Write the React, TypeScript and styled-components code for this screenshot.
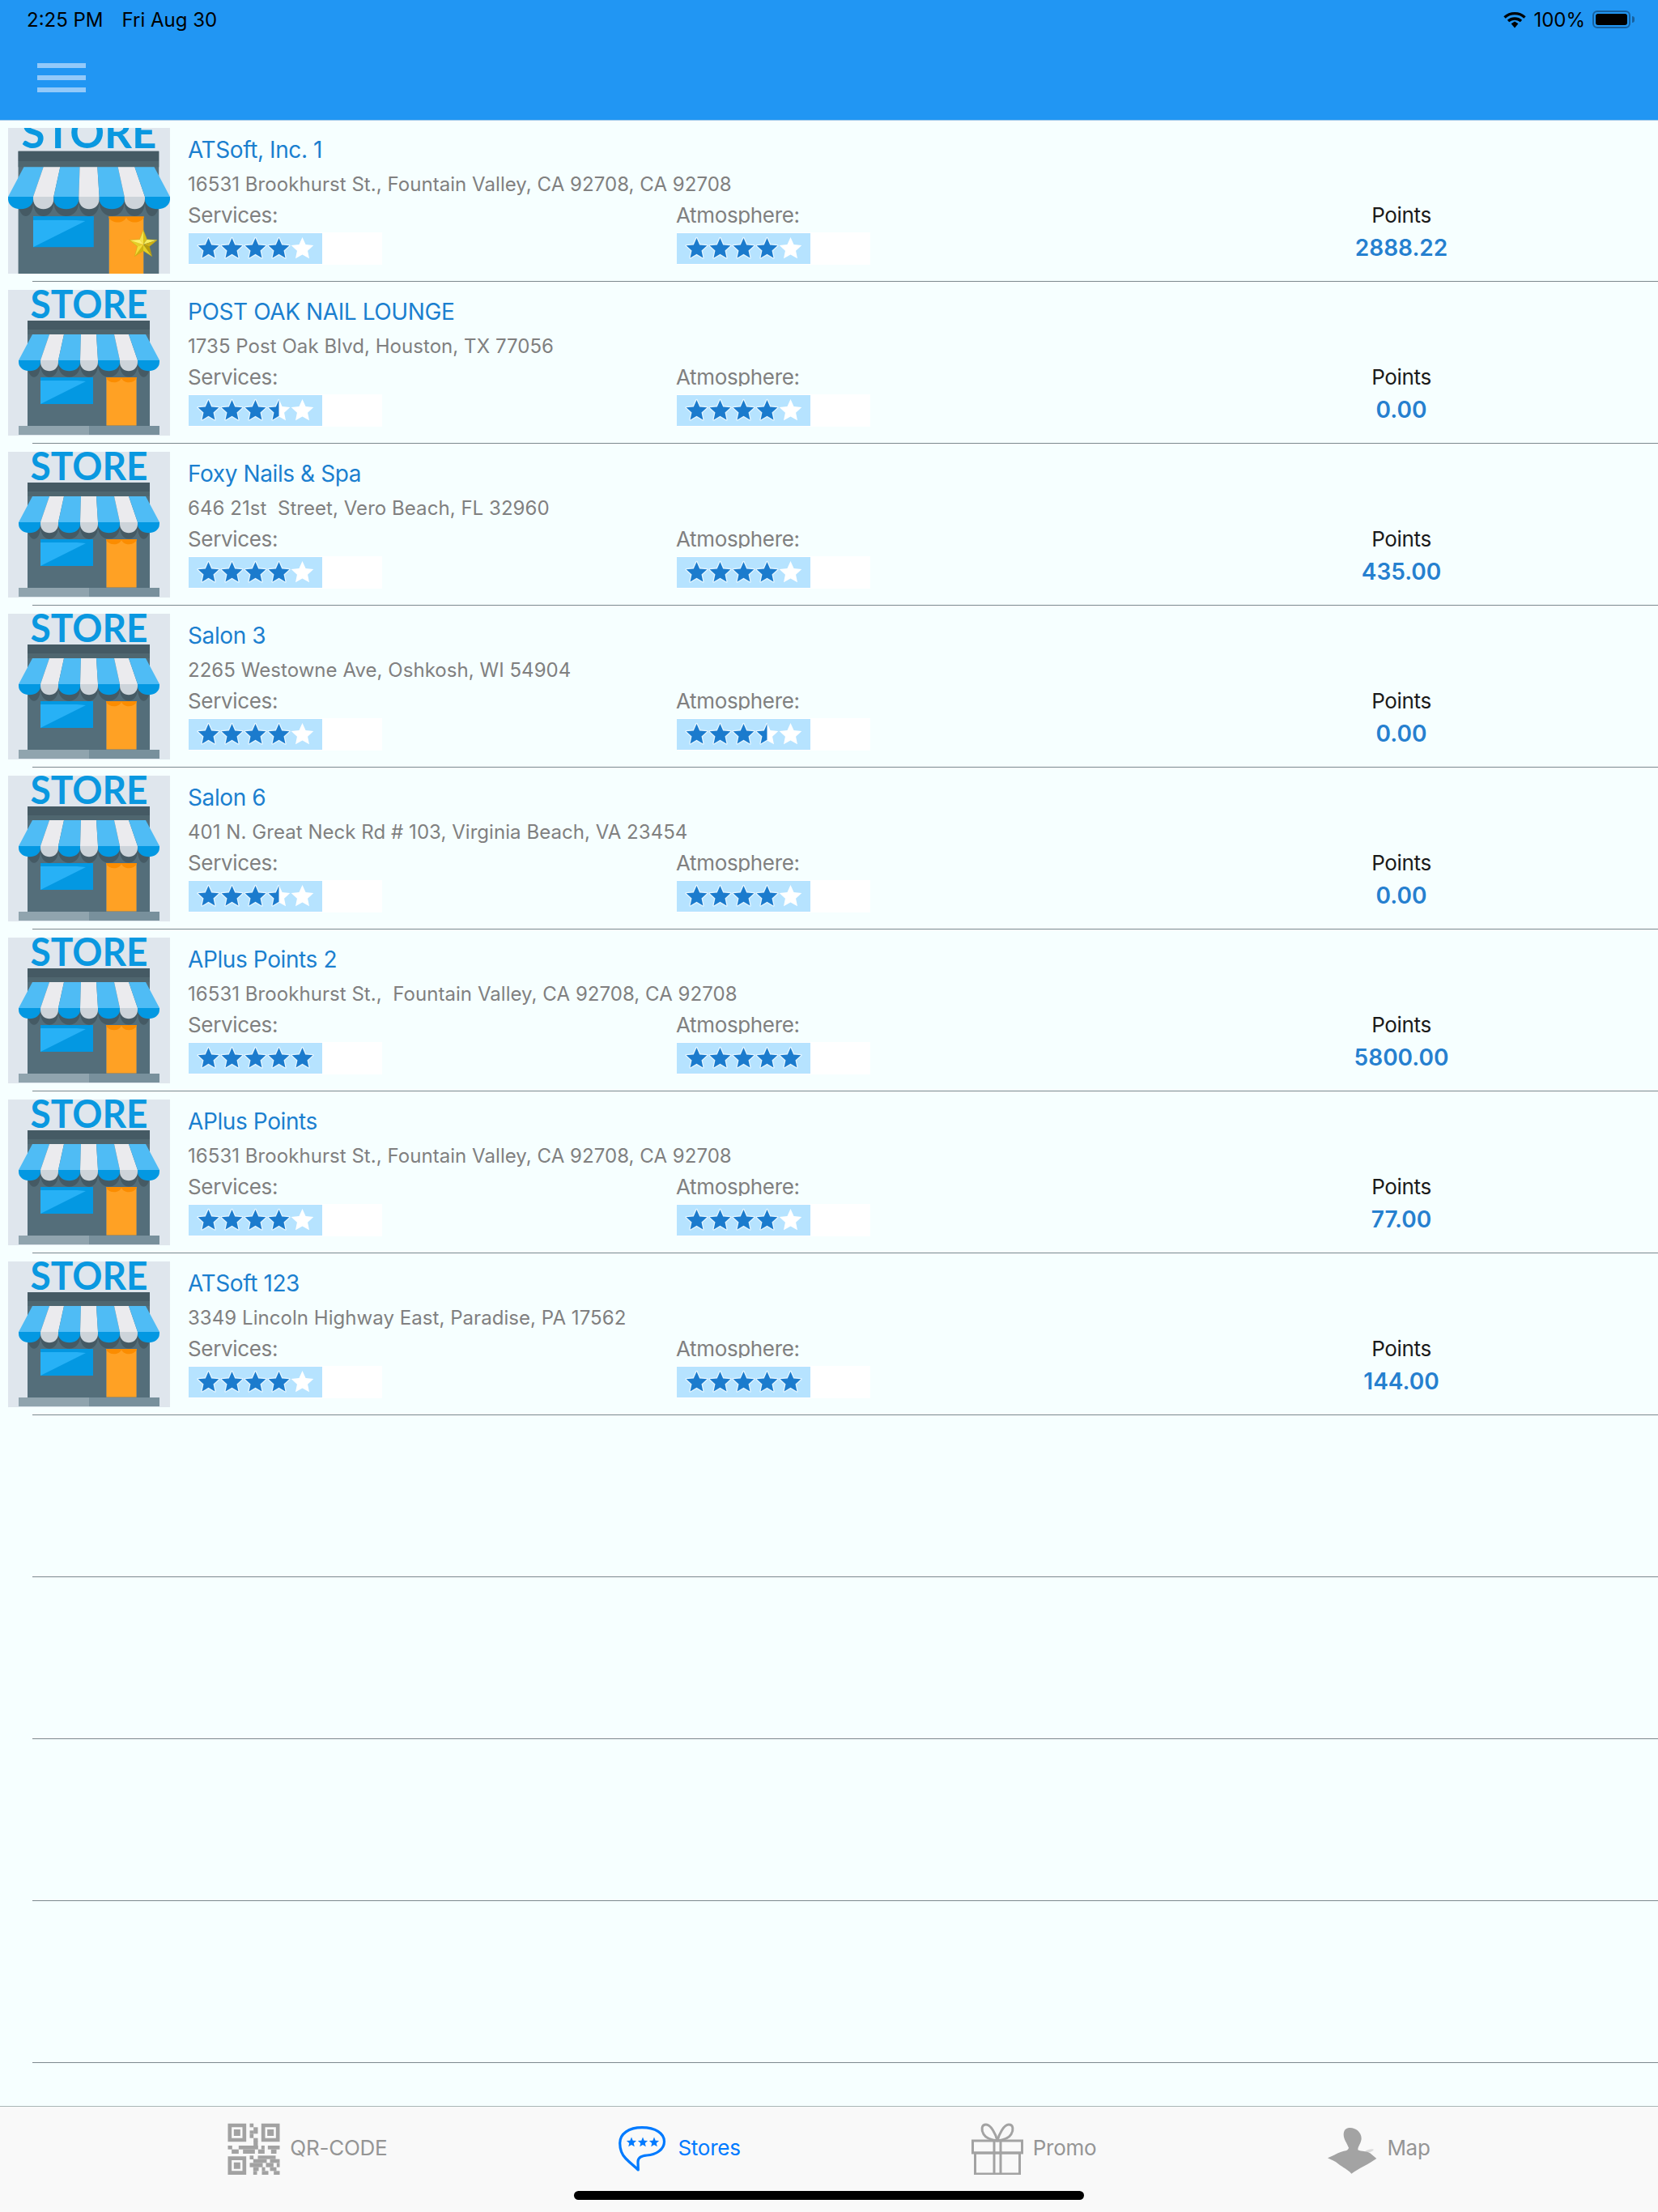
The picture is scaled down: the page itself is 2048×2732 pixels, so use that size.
import React from "react";
import styled, { createGlobalStyle } from "styled-components";

const Global = createGlobalStyle`
  html, body { margin: 0; padding: 0; background: #f6ffff; }
  * { box-sizing: border-box; }
  body { font-family: Inter, "Liberation Sans", sans-serif; }
`;

const Page = styled.div`
  width: 2048px;
  height: 2732px;
  display: flex;
  flex-direction: column;
  background: #f6ffff;
  overflow: hidden;
`;

const Header = styled.header`
  height: 149px;
  flex: none;
  margin-bottom: -1px;
  background: #2196f3;
  border-bottom: 1px solid #9cc6e8;
  position: relative;
  z-index: 1;
`;

const StatusBar = styled.div`
  height: 48px;
  padding: 0 34px 0 33px;
  display: flex;
  align-items: center;
  justify-content: space-between;
  font-size: 24px;
  color: #000;
`;

const StatusGroup = styled.div<{ $gap: number }>`
  display: flex;
  align-items: center;
  gap: ${(p) => p.$gap}px;
`;

const Battery = styled.div`
  width: 47px;
  height: 22px;
  border: 2px solid #17609e;
  border-radius: 6px;
  padding: 2px;
  position: relative;
  &::before {
    content: "";
    display: block;
    width: 100%;
    height: 100%;
    background: #000;
    border-radius: 3px;
  }
  &::after {
    content: "";
    position: absolute;
    right: -7px;
    top: 5px;
    width: 3px;
    height: 8px;
    background: #17609e;
    border-radius: 0 3px 3px 0;
  }
`;

const Toolbar = styled.div`
  padding: 30px 0 0 46px;
`;

const MenuButton = styled.div`
  width: 60px;
  display: flex;
  flex-direction: column;
  gap: 9px;
`;

const MenuBar = styled.span`
  display: block;
  height: 6px;
  background: #93c9f9;
`;

const List = styled.main`
  flex: 1;
  min-height: 0;
`;

const Row = styled.section`
  height: 199px;
  padding-left: 10px;
  display: flex;
`;

const Separator = styled.div`
  height: 1px;
  margin-left: 40px;
  background: #7d888e;
`;

const Thumb = styled.div`
  position: relative;
  flex: none;
  width: 200px;
  height: 180px;
  margin-top: 10px;
  background: #dfe6ed;
  svg { display: block; }
`;

const FavouriteBadge = styled.svg`
  position: absolute;
  left: 149px;
  top: 125px;
  width: 36px;
  height: 36px;
`;

const Info = styled.div`
  margin-left: 22px;
  padding-top: 20px;
  flex: 1;
`;

const Title = styled.div`
  font-size: 28px;
  line-height: 34px;
  letter-spacing: -0.4px;
  color: #1b7fcf;
  white-space: pre;
`;

const Address = styled.div`
  margin-top: 8px;
  font-size: 24px;
  line-height: 35px;
  letter-spacing: 0.05px;
  color: #808080;
  white-space: pre;
`;

const Metrics = styled.div`
  display: grid;
  grid-template-columns: 603px 603px 586px;
`;

const Label = styled.div<{ $dark?: boolean }>`
  height: 32px;
  line-height: 41px;
  font-size: 26px;
  letter-spacing: -0.35px;
  overflow: hidden;
  color: ${(p) => (p.$dark ? "#1a1a1a" : "#808080")};
`;

const Track = styled.div`
  margin-top: 10px;
  margin-left: 1px;
  width: 239px;
  height: 40px;
  background: #fff;
  display: flex;
  align-items: center;
`;

const TrackFill = styled.div`
  width: 165px;
  height: 38px;
  padding-left: 10px;
  background: #b6e3ff;
  display: flex;
  align-items: center;
  svg { flex: none; display: block; overflow: visible; }
`;

const PointsCell = styled.div`
  text-align: center;
`;

const PointsValue = styled.div`
  margin-top: 9px;
  font-size: 28px;
  line-height: 40px;
  font-weight: 600;
  color: #2680cf;
`;

const TabBar = styled.nav`
  height: 131px;
  flex: none;
  background: #f9f9f9;
  border-top: 1px solid #a9b6b6;
  position: relative;
  display: flex;
  justify-content: center;
  align-items: flex-start;
  gap: 285px;
  padding-top: 19px;
`;

const Tab = styled.div<{ $active?: boolean }>`
  height: 66px;
  display: flex;
  align-items: center;
  gap: ${(p) => (p.$active ? 14 : 12)}px;
  font-size: 26px;
  letter-spacing: -0.25px;
  color: ${(p) => (p.$active ? "#007aff" : "#959595")};
  svg { display: block; flex: none; }
`;

const TabLabel = styled.span`
  margin-bottom: 3px;
`;

const HomeIndicator = styled.div`
  position: absolute;
  left: 709px;
  width: 630px;
  bottom: 15px;
  height: 11px;
  border-radius: 6px;
  background: #000;
`;

function starPoints(cx: number, cy: number, R: number, r: number) {
  const pts: string[] = [];
  for (let i = 0; i < 10; i++) {
    const a = (-90 + i * 36) * (Math.PI / 180);
    const rad = i % 2 === 0 ? R : r;
    pts.push(`${(cx + rad * Math.cos(a)).toFixed(2)},${(cy + rad * Math.sin(a)).toFixed(2)}`);
  }
  return pts.join(" ");
}

const STAR = starPoints(14.5, 15.5, 13.5, 6.3);
const STAR_WHITE = starPoints(14.5, 15.5, 14.5, 6.9);

function RatingStar({ fill, id }: { fill: number; id: string }) {
  return (
    <svg width="29" height="30" viewBox="0 0 29 30">
      <clipPath id={id}>
        <rect x="-4" y="-4" width={fill >= 1 ? 37 : 4 + 29 * fill} height="38" />
      </clipPath>
      {fill < 1 && <polygon points={STAR_WHITE} fill="#fff" />}
      {fill > 0 && (
        <g clipPath={`url(#${id})`}>
          <polygon points={STAR} fill="#e4f5ff" stroke="#e4f5ff" strokeWidth="2.6" strokeLinejoin="round" />
          <polygon points={STAR} fill="#1b7bcd" />
        </g>
      )}
    </svg>
  );
}

function Rating({ value, id }: { value: number; id: string }) {
  return (
    <Track>
      <TrackFill>
        {[0, 1, 2, 3, 4].map((i) => (
          <RatingStar key={i} id={`${id}-${i}`} fill={Math.max(0, Math.min(1, value - i))} />
        ))}
      </TrackFill>
    </Track>
  );
}

function GoldStar() {
  const cx = 18;
  const cy = 19;
  const R = 18;
  const r = 7.8;
  const at = (deg: number, rad: number) => {
    const a = (deg * Math.PI) / 180;
    return `${(cx + rad * Math.cos(a)).toFixed(2)},${(cy + rad * Math.sin(a)).toFixed(2)}`;
  };
  const colours = [
    ["#f4e44e", "#d9c01a"],
    ["#f9ee60", "#cfb012"],
    ["#b99c0a", "#e6d024"],
    ["#cdb414", "#f1de38"],
    ["#e4cf28", "#fbf16e"],
  ];
  return (
    <FavouriteBadge viewBox="0 0 36 36">
      {colours.map(([before, after], i) => {
        const tip = -90 + i * 72;
        return (
          <React.Fragment key={i}>
            <polygon points={`${cx},${cy} ${at(tip, R)} ${at(tip - 36, r)}`} fill={before} />
            <polygon points={`${cx},${cy} ${at(tip, R)} ${at(tip + 36, r)}`} fill={after} />
          </React.Fragment>
        );
      })}
      <polygon points={starPoints(cx, cy, R, r)} fill="none" stroke="#c4a80e" strokeWidth="0.5" />
    </FavouriteBadge>
  );
}

function StoreArt({ zoomed }: { zoomed?: boolean }) {
  const scallops: [number, number, boolean][] = [
    [13, 40, true], [40, 62, false], [62, 89, true], [89, 111, false],
    [111, 138, true], [138, 160, false], [160, 187, true],
  ];
  const tops = [30, 51, 69, 90, 109, 131, 149, 170];
  const arc = (a: number, b: number, y: number, depth: number) =>
    `M${a} ${y}H${b}V${y + 2}C${b} ${y + depth + 3} ${a} ${y + depth + 3} ${a} ${y + 2}Z`;
  return (
    <svg
      width="200"
      height="180"
      viewBox={zoomed ? "13 13 174 156.5" : "0 0 200 180"}
      preserveAspectRatio="xMidYMid slice"
    >
      <rect x="-10" y="-10" width="220" height="200" fill="#dfe6ed" />
      <text
        x="100"
        y="35"
        textAnchor="middle"
        fontFamily="Lato, sans-serif"
        fontWeight="700"
        fontSize="47"
        textLength="145"
        lengthAdjust="spacingAndGlyphs"
        fill="#0a98e0"
      >
        STORE
      </text>
      <rect x="24" y="38" width="151" height={zoomed ? 140 : 131} fill="#546e7a" />
      <rect x="24" y="38" width="151" height="11" fill="#455a64" />
      <rect x="24" y="49" width="151" height="6" fill="#4f666f" />
      {scallops.map(([a, b], i) => (
        <path key={`s${i}`} d={arc(Math.max(a, 24), Math.min(b, 175), 90, 20)} fill="#455a64" />
      ))}
      <rect x="40" y="108" width="65" height="33" fill="#0398e2" />
      <polygon points="40,108 96,113 40,141" fill="#27b1f6" />
      <rect x="40" y="108" width="65" height="4" fill="#0398e2" />
      <rect x="121" y="108" width="38" height={zoomed ? 70 : 60} fill="#ffa124" stroke="#3f7199" strokeWidth="0.8" />
      <path d="M121 108H159V109C155 116 143 116 140 109C137 116 125 116 121 109Z" fill="#fb8c00" />
      {!zoomed && <rect x="13" y="168" width="87" height="11" fill="#90a4ae" />}
      {!zoomed && <rect x="100" y="168" width="87" height="11" fill="#78909c" />}
      {scallops.map(([a, b, blue], i) => (
        <polygon
          key={`t${i}`}
          points={`${tops[i]},55 ${tops[i + 1]},55 ${b},87 ${a},87`}
          fill={blue ? "#4fbcf5" : "#ebebee"}
        />
      ))}
      {scallops.map(([a, b, blue], i) => (
        <path key={`c${i}`} d={arc(a, b, 87, 14)} fill={blue ? "#0398e2" : "#cdd4da"} />
      ))}
    </svg>
  );
}

const finder = (x: number, y: number) =>
  `M${x} ${y}h68v68h-68zM${x + 14} ${y + 14}v40h40v-40zM${x + 22} ${y + 22}h24v24h-24z`;

const QR_BLOCKS: [number, number, number, number][] = [
  [105, 26, 14, 14], [119, 40, 16, 24], [105, 52, 14, 12], [105, 64, 14, 16], [119, 80, 16, 14],
  [119, 92, 16, 16],
  [24, 108, 16, 14], [64, 108, 72, 14], [148, 108, 12, 14], [172, 108, 44, 14],
  [38, 122, 26, 16], [80, 122, 44, 16], [136, 122, 24, 16], [184, 122, 20, 16],
  [105, 145, 14, 14], [135, 145, 66, 13], [118, 158, 50, 14], [180, 158, 36, 14],
  [105, 172, 48, 16], [165, 172, 28, 16], [205, 172, 11, 16],
  [118, 188, 20, 14], [150, 188, 12, 14], [180, 188, 24, 14],
  [118, 202, 14, 14], [150, 202, 24, 14], [194, 202, 22, 14],
];

function QrIcon() {
  return (
    <svg width="65" height="64" viewBox="24 24 192 192" fill="#a2a2a2">
      <path fillRule="evenodd" d={`${finder(24, 26)}${finder(148, 26)}${finder(24, 148)}`} />
      {QR_BLOCKS.map(([x, y, w, h]) => (
        <rect key={`${x}-${y}`} x={x} y={y} width={w} height={h} />
      ))}
    </svg>
  );
}

function BubbleIcon() {
  return (
    <svg width="60" height="58" viewBox="0 0 60 58">
      <path
        d="M25.3 55 C20 50 15 46 10 41 C5 36 2.7 29 2.7 22 C2.7 10 14 2.7 30 2.7 C47 2.7 57.5 10 57.5 20 C57.5 30 47 36.5 36 37 C29 37.5 25 40 25 45 Z"
        fill="none"
        stroke="#007aff"
        strokeWidth="3.2"
        strokeLinejoin="round"
      />
      <polygon points={starPoints(17, 21, 6.4, 2.9)} fill="#007aff" />
      <polygon points={starPoints(31, 21, 6.4, 2.9)} fill="#007aff" />
      <polygon points={starPoints(45, 21, 6.4, 2.9)} fill="#007aff" />
    </svg>
  );
}

function GiftIcon() {
  return (
    <svg width="64" height="64" viewBox="0 0 64 64" fill="none" stroke="#a3a3a3" strokeWidth="3">
      <rect x="1.5" y="22" width="61" height="15" />
      <rect x="4.5" y="37" width="55" height="26" />
      <path d="M28 22V63M36 22V63" />
      <path d="M32 22C30 14 24 2 18 2C12 2 12 9 15 14C18 19 24 21 32 22C40 21 46 19 49 14C52 9 52 2 46 2C40 2 34 14 32 22Z" />
    </svg>
  );
}

function MapIcon() {
  return (
    <svg width="62" height="64" viewBox="22 18 186 192">
      <ellipse cx="178" cy="122" rx="18" ry="5" fill="#a3a3a3" opacity="0.35" transform="rotate(-18 178 122)" />
      <path
        d="M105 36 C125 34 150 50 150 75 C150 92 136 105 137 118 C150 125 170 122 182 130 L206 150 C190 160 175 170 160 178 C140 188 125 198 113 206 C100 190 80 182 65 170 C52 160 40 155 25 148 C40 142 60 130 75 125 C88 120 100 122 103 110 C95 90 85 80 84 62 C84 45 92 37 105 36 Z"
        fill="#a3a3a3"
      />
    </svg>
  );
}

const STORES = [
  { name: "ATSoft, Inc. 1", address: "16531 Brookhurst St., Fountain Valley, CA 92708, CA 92708", s: 4, a: 4, points: "2888.22" },
  { name: "POST OAK NAIL LOUNGE", address: "1735 Post Oak Blvd, Houston, TX 77056", s: 3.5, a: 4, points: "0.00" },
  { name: "Foxy Nails & Spa", address: "646 21st  Street, Vero Beach, FL 32960", s: 4, a: 4, points: "435.00" },
  { name: "Salon 3", address: "2265 Westowne Ave, Oshkosh, WI 54904", s: 4, a: 3.5, points: "0.00" },
  { name: "Salon 6", address: "401 N. Great Neck Rd # 103, Virginia Beach, VA 23454", s: 3.5, a: 4, points: "0.00" },
  { name: "APlus Points 2", address: "16531 Brookhurst St.,  Fountain Valley, CA 92708, CA 92708", s: 5, a: 5, points: "5800.00" },
  { name: "APlus Points", address: "16531 Brookhurst St., Fountain Valley, CA 92708, CA 92708", s: 4, a: 4, points: "77.00" },
  { name: "ATSoft 123", address: "3349 Lincoln Highway East, Paradise, PA 17562", s: 4, a: 5, points: "144.00" },
];

export default function App() {
  return (
    <Page>
      <Global />
      <Header>
        <StatusBar>
          <StatusGroup $gap={23}>
            <span>2:25 PM</span>
            <span>Fri Aug 30</span>
          </StatusGroup>
          <StatusGroup $gap={9}>
            <svg width="28" height="21" viewBox="0 0 28 21" fill="none" stroke="#000" strokeWidth="3.4">
              <path d="M1.5 7.5C8.5 1 19.5 1 26.5 7.5" />
              <path d="M6 12C10.5 8 17.5 8 22 12" />
              <polygon points="9.6,15.2 14,12.6 18.4,15.2 14,20.5" fill="#000" stroke="none" />
            </svg>
            <span>100%</span>
            <Battery />
          </StatusGroup>
        </StatusBar>
        <Toolbar>
          <MenuButton>
            <MenuBar />
            <MenuBar />
            <MenuBar />
          </MenuButton>
        </Toolbar>
      </Header>
      <List>
        {STORES.map((store, i) => (
          <React.Fragment key={store.name}>
            <Row>
              <Thumb>
                <StoreArt zoomed={i === 0} />
                {i === 0 && <GoldStar />}
              </Thumb>
              <Info>
                <Title>{store.name}</Title>
                <Address>{store.address}</Address>
                <Metrics>
                  <div>
                    <Label>Services:</Label>
                    <Rating value={store.s} id={`s${i}`} />
                  </div>
                  <div>
                    <Label>Atmosphere:</Label>
                    <Rating value={store.a} id={`a${i}`} />
                  </div>
                  <PointsCell>
                    <Label $dark>Points</Label>
                    <PointsValue>{store.points}</PointsValue>
                  </PointsCell>
                </Metrics>
              </Info>
            </Row>
            <Separator />
          </React.Fragment>
        ))}
        {[0, 1, 2, 3].map((i) => (
          <React.Fragment key={i}>
            <Row />
            <Separator />
          </React.Fragment>
        ))}
      </List>
      <TabBar>
        <Tab>
          <QrIcon />
          <TabLabel>QR-CODE</TabLabel>
        </Tab>
        <Tab $active>
          <BubbleIcon />
          <TabLabel>Stores</TabLabel>
        </Tab>
        <Tab>
          <GiftIcon />
          <TabLabel>Promo</TabLabel>
        </Tab>
        <Tab>
          <MapIcon />
          <TabLabel>Map</TabLabel>
        </Tab>
        <HomeIndicator />
      </TabBar>
    </Page>
  );
}
